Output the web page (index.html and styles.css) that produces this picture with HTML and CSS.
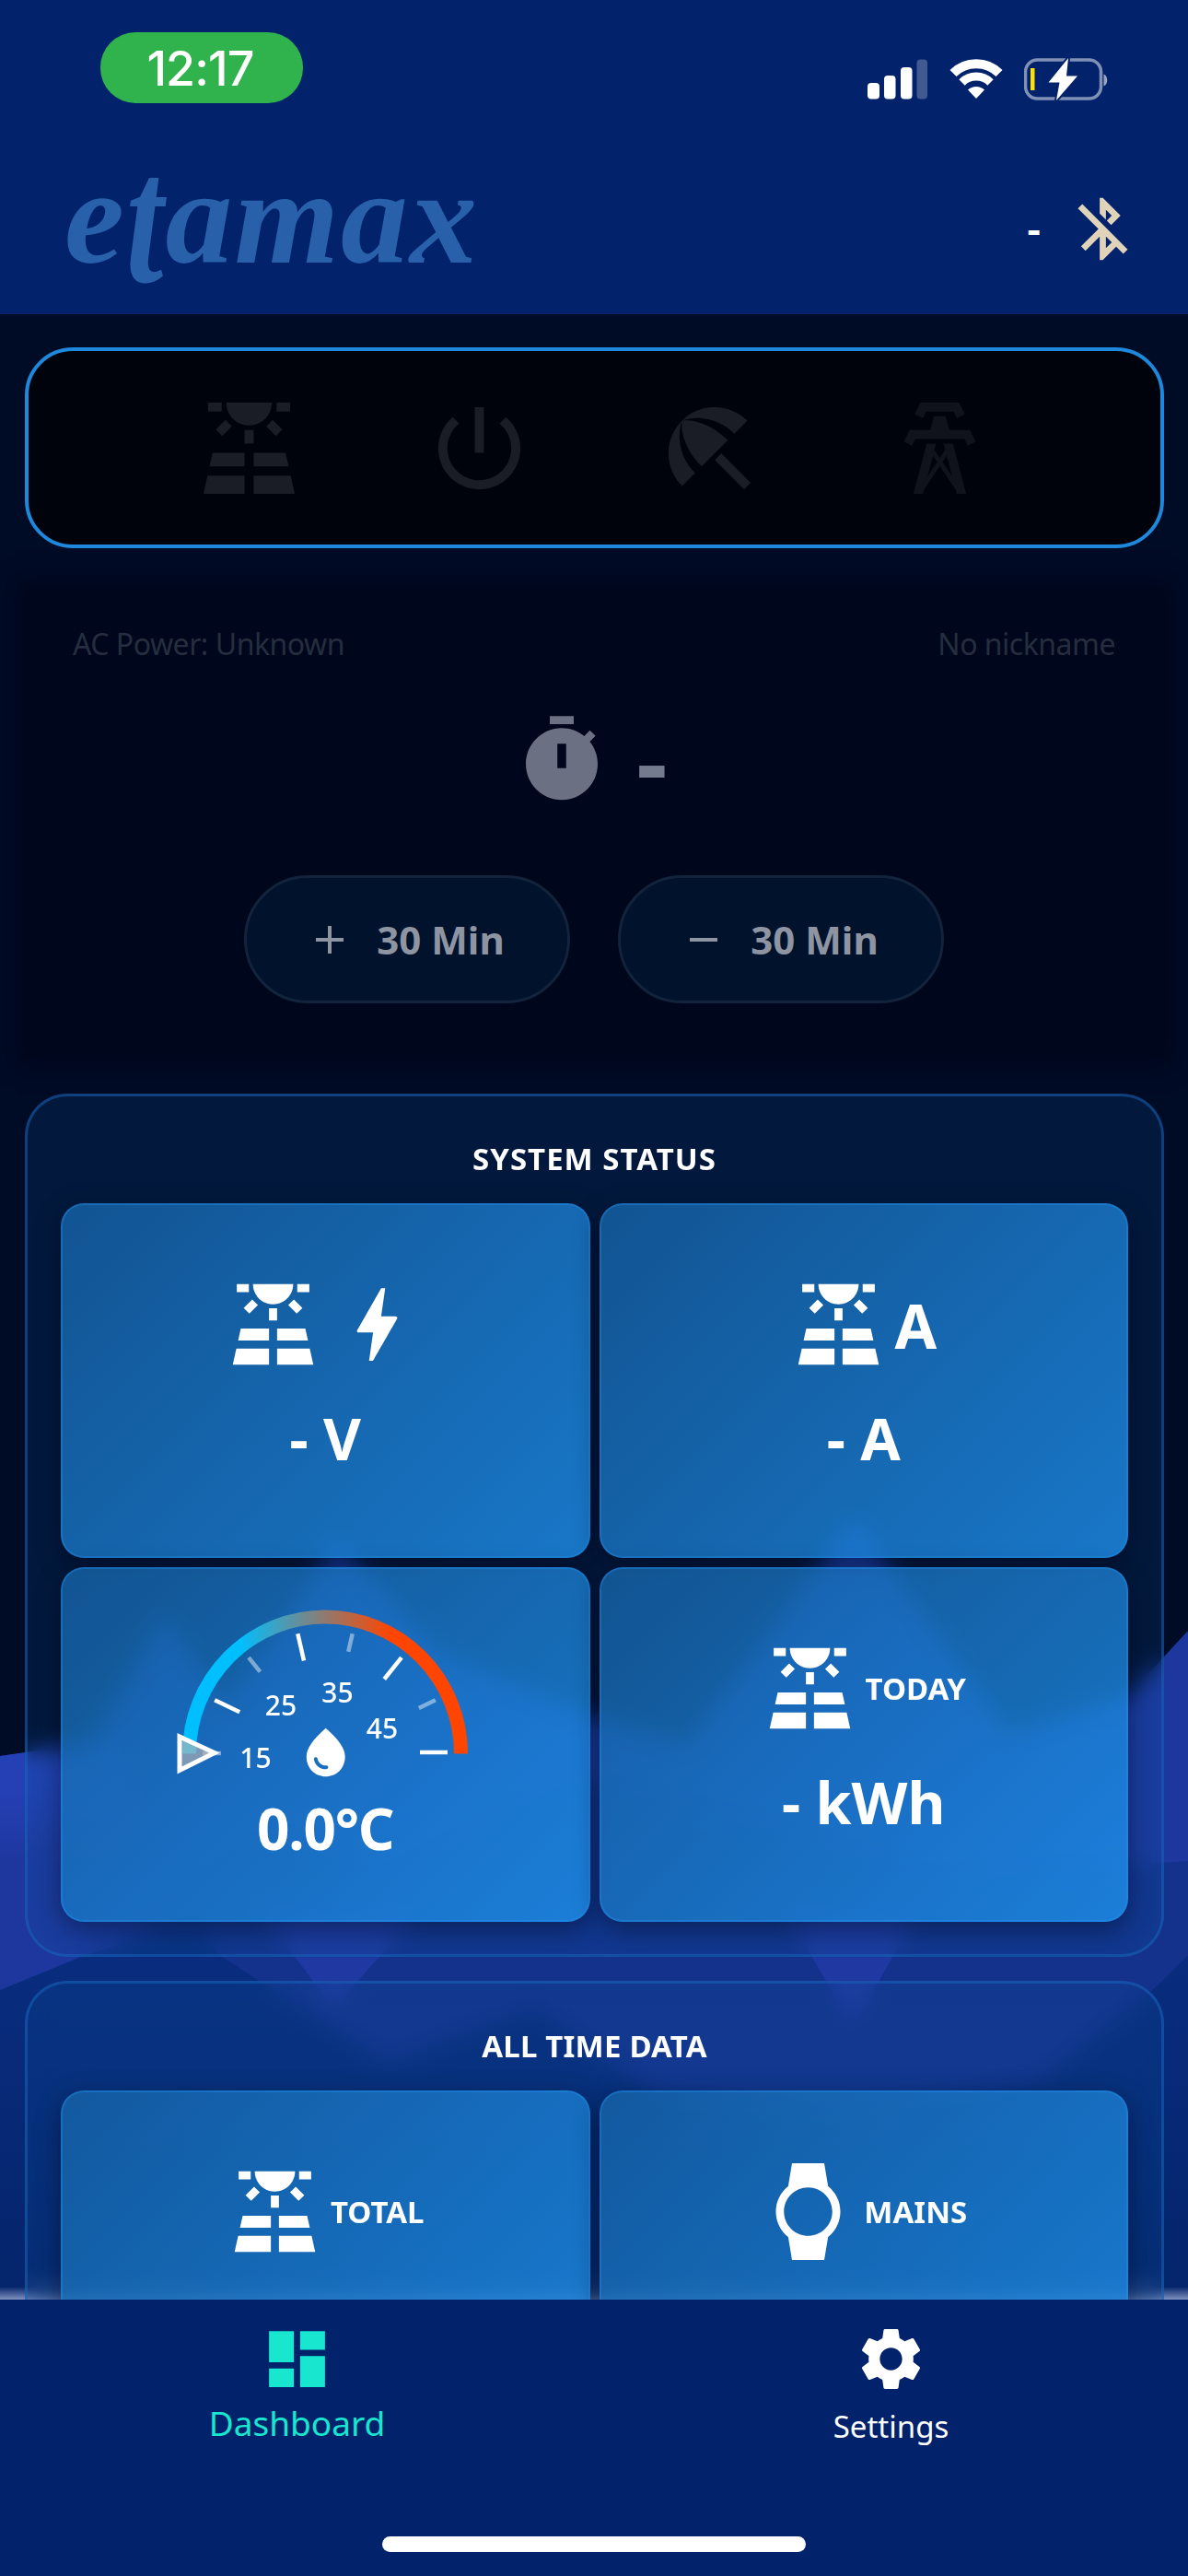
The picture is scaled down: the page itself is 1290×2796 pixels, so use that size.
FILE: index.html
```html
<!DOCTYPE html>
<html lang="en">
<head>
<meta charset="utf-8">
<title>etamax</title>
<link rel="stylesheet" href="styles.css">
</head>
<body>
<svg class="defs" width="0" height="0" aria-hidden="true">
  <symbol id="solar" viewBox="0 0 24 24"><path d="M3.33 16H11v-3H4zM13 16h7.67L20 13h-7zM21.11 18H13v4h9zM2 22h9v-4H2.89zM11 8h2v3h-2zM15.76 7.21l1.41-1.41 2.12 2.12-1.41 1.41zM4.71 7.92L6.83 5.8l1.41 1.41-2.12 2.12zM3 2h3v2H3zM18 2h3v2h-3zM12 7c2.76 0 5-2.24 5-5H7c0 2.76 2.24 5 5 5z"/></symbol>
</svg>

<div class="screen">
  <header class="header">
    <div class="statusbar">
      <span class="clock">12:17</span>
      <div class="indicators">
        <svg width="66" height="44" viewBox="0 0 66 44" fill="#fff"><rect x="0" y="26" width="13" height="17.5" rx="4"/><rect x="18" y="18" width="12.5" height="25.5" rx="4"/><rect x="36" y="9" width="12.5" height="34.5" rx="4"/><rect x="53.5" y="0.5" width="11.5" height="43" rx="4" opacity=".25"/></svg>
        <svg class="wifi" width="58" height="44" viewBox="0 0 58 44" fill="none" stroke="#fff"><path d="M4 15.5a35.5 35.5 0 0 1 50 0" stroke-width="10"/><path d="M13.5 25.5a22 22 0 0 1 31 0" stroke-width="9"/><path d="M29 43l-9-9.5a13 13 0 0 1 18 0z" fill="#fff" stroke="none"/></svg>
        <svg width="92" height="48" viewBox="0 0 92 48"><rect x="1.5" y="3" width="82" height="42" rx="13" fill="none" stroke="#fff" stroke-opacity=".5" stroke-width="3.5"/><path d="M86.5 18.5v13c5-2 5-11 0-13z" fill="#fff" opacity=".6"/><rect x="7" y="12" width="4.5" height="24" fill="#ffe000"/><path d="M48 1L26.5 27.5h12L35 47 58 20.5H46z" fill="#fff" stroke="#02236b" stroke-width="4" paint-order="stroke"/></svg>
      </div>
    </div>
    <div class="brandbar">
      <div class="brand">e<span class="tall">t</span>amax</div>
      <div class="link"><span>-</span>
        <svg width="81" height="81" viewBox="0 0 24 24" fill="#dfd4ba"><path d="M13 5.83l1.88 1.88-1.6 1.6 1.41 1.41 3.02-3.02L12 2h-1v5.03l2 2v-3.2zM5.41 4L4 5.41 10.59 12 5 17.59 6.41 19 11 14.41V22h1l4.29-4.29 2.3 2.29L20 18.59 5.41 4zM13 18.17v-3.76l1.88 1.88L13 18.17z"/></svg>
      </div>
    </div>
  </header>

  <main class="content">
    <svg class="backdrop" width="1290" height="2155" viewBox="0 341 1290 2155" aria-hidden="true">
      <defs><linearGradient id="low" x1="0" y1="0" x2="0" y2="1"><stop offset="0" stop-color="#0a2d80"/><stop offset="1" stop-color="#04246b"/></linearGradient>
      <linearGradient id="left" x1="0" y1="1890" x2="0" y2="2020" gradientUnits="userSpaceOnUse"><stop offset="0" stop-color="#2540b5"/><stop offset=".4" stop-color="#2540b5"/><stop offset="1" stop-color="#1e379f"/></linearGradient></defs>
      <rect y="341" width="1290" height="2155" fill="#000b26"/>
      <path fill="#1e379f" d="M0 1906L100 1892 178 1755 245 1850 366 1672 480 1795 640 1862 745 1893 928 1648 1096 1882 1225 1840 1290 1770V2300H0z"/>
      <path fill="url(#left)" d="M0 1906L100 1892 140 1885V2060H0z"/>
      <path fill="#14318c" d="M120 2115L300 1990 420 2040 620 1930 860 1990 1010 2040 1290 2020V2320H120z"/>
      <path fill="url(#low)" d="M0 2160L90 2123 210 2085 240 2123 420 2240 580 2180 720 2280 900 2300 1130 2260 1251 2160 1290 2123V2496H0z"/>
      <path fill="#2038a1" d="M280 2070H460L362 2180zM850 2070H1000L926 2200z"/>
    </svg>

    <section class="modes">
      <svg viewBox="0 0 24 24"><use href="#solar"/></svg>
      <svg viewBox="0 0 24 24"><path d="M13 3h-2v10h2V3zm4.83 2.17l-1.42 1.42C17.99 7.86 19 9.81 19 12c0 3.87-3.13 7-7 7s-7-3.13-7-7c0-2.19 1.01-4.14 2.58-5.42L6.17 5.17C4.23 6.82 3 9.26 3 12c0 4.97 4.03 9 9 9s9-4.03 9-9c0-2.74-1.23-5.18-3.17-6.83z"/></svg>
      <svg viewBox="0 0 24 24"><path d="M13.127 14.56l1.43-1.43 6.44 6.443L19.57 21zm4.293-5.73l2.86-2.86c-3.95-3.95-10.35-3.96-14.3-.02 3.93-1.3 8.31-.25 11.44 2.88zM5.95 5.98c-3.94 3.95-3.93 10.35.02 14.3l2.86-2.86C5.7 14.29 4.65 9.91 5.95 5.98zm.02-.02l-.01.01c-.38 3.01 1.17 6.88 4.3 10.02l5.73-5.73c-3.13-3.13-7.01-4.68-10.02-4.3z"/></svg>
      <svg class="dim" viewBox="0 0 24 24"><path d="M8.28 5.45L6.5 4.55 7.76 2H16.23L17.5 4.55 15.72 5.44 15 4H9L8.28 5.45M18.62 8H14.09L13.3 5H10.7L9.91 8H5.38L4.1 10.55 5.89 11.44 6.62 10H17.38L18.1 11.45 19.89 10.56 18.62 8M17.77 22H15.7L15.46 21.1 12 15.9 8.53 21.1 8.3 22H6.23L9.12 11H11.19L10.83 12.35 12 14.1 13.16 12.35 12.81 11H14.88L17.77 22M11.4 15L10.5 13.65 9.32 18.13 11.4 15M14.68 18.12L13.5 13.64 12.6 15 14.68 18.12Z"/></svg>
    </section>

    <section class="timer">
      <div class="timer-info"><span>AC Power: Unknown</span><span>No nickname</span></div>
      <div class="timer-value">
        <svg width="104" height="104" viewBox="0 0 24 24"><path fill-rule="evenodd" d="M15 1H9v2h6V1zM10.9 14h2.2V7.9h-2.2zM19.03 7.39l1.42-1.42c-.43-.51-.9-.99-1.41-1.41l-1.42 1.42C16.07 4.74 14.12 4 12 4c-4.97 0-9 4.03-9 9s4.02 9 9 9 9-4.03 9-9c0-2.12-.74-4.07-1.97-5.61z"/></svg>
        <span class="dash">-</span>
      </div>
      <div class="timer-actions">
        <button class="step"><svg width="30" height="30" viewBox="0 0 30 30"><path d="M15 0v30M0 15h30"/></svg>30 Min</button>
        <button class="step"><svg width="30" height="30" viewBox="0 0 30 30"><path d="M0 15h30"/></svg>30 Min</button>
      </div>
    </section>

    <section class="panel">
      <h2 class="wide">SYSTEM STATUS</h2>
      <div class="tiles">
        <article class="tile">
          <div class="tile-head"><svg viewBox="0 0 24 24"><use href="#solar"/></svg><svg viewBox="0 0 24 24"><path d="M11 21h-1l1-7H7.5c-.58 0-.57-.32-.38-.66.19-.34.05-.08.07-.12C8.48 10.94 10.42 7.54 13 3h1l-1 7h3.5c.49 0 .56.33.47.51l-.07.15C12.96 17.55 11 21 11 21z"/></svg></div>
          <div class="value">- V</div>
        </article>
        <article class="tile">
          <div class="tile-head"><svg viewBox="0 0 24 24"><use href="#solar"/></svg><span class="unit">A</span></div>
          <div class="value">- A</div>
        </article>
        <article class="tile tile-gauge">
          <svg class="gauge" width="340" height="200" viewBox="183 1736 340 200">
            <defs><linearGradient id="heat" x1="198" y1="0" x2="508" y2="0" gradientUnits="userSpaceOnUse"><stop offset=".2" stop-color="#00bfff"/><stop offset=".73" stop-color="#ff4500"/></linearGradient></defs>
            <path d="M205.5 1903.5a147.5 148.5 0 0 1 295 0" fill="none" stroke="url(#heat)" stroke-width="15"/>
            <g stroke="#fff" stroke-width="4.5">
              <path d="M220 1903h30" transform="rotate(25.7 353 1903)"/><path d="M220 1903h30" transform="rotate(77.1 353 1903)"/><path d="M220 1903h30" transform="rotate(128.6 353 1903)"/><path d="M220 1902h30" transform="rotate(180 353 1902)"/>
              <g opacity=".45"><path d="M220 1903h20"/><path d="M220 1903h20" transform="rotate(51.4 353 1903)"/><path d="M220 1903h20" transform="rotate(102.9 353 1903)"/><path d="M220 1903h20" transform="rotate(154.3 353 1903)"/></g>
            </g>
            <path d="M195 1885l38 17.5-38 19z" fill="#b4b4b4" fill-opacity=".65" stroke="#fff" stroke-width="5"/>
            <g class="gauge-labels"><text x="277.5" y="1919">15</text><text x="305" y="1861.5">25</text><text x="366.5" y="1848">35</text><text x="415" y="1887">45</text></g>
            <path transform="translate(322.3 1870.5) scale(2.62)" fill="#fff" fill-rule="evenodd" d="M12 2c-5.33 4.55-8 8.48-8 11.8 0 4.98 3.8 8.2 8 8.2s8-3.22 8-8.2c0-3.32-2.67-7.25-8-11.8zM7.83 14c.37 0 .67.26.74.62.41 2.22 2.28 2.98 3.64 2.87.43-.02.79.32.79.75 0 .4-.32.73-.72.75-2.13.13-4.62-1.09-5.19-4.12-.08-.45.28-.87.74-.87z"/>
          </svg>
          <div class="value">0.0°C</div>
        </article>
        <article class="tile">
          <div class="tile-head"><svg viewBox="0 0 24 24"><use href="#solar"/></svg><span class="tag">TODAY</span></div>
          <div class="value">- kWh</div>
        </article>
      </div>
    </section>

    <section class="panel">
      <h2>ALL TIME DATA</h2>
      <div class="tiles">
        <article class="tile">
          <div class="tile-head"><svg viewBox="0 0 24 24"><use href="#solar"/></svg><span class="tag">TOTAL</span></div>
        </article>
        <article class="tile">
          <div class="tile-head"><svg viewBox="0 0 24 24"><path d="M20 12c0-2.54-1.19-4.81-3.04-6.27L16 0H8l-.95 5.73C5.19 7.19 4 9.45 4 12s1.19 4.81 3.05 6.27L8 24h8l.96-5.73C18.81 16.81 20 14.54 20 12zM6 12c0-3.31 2.69-6 6-6s6 2.69 6 6-2.69 6-6 6-6-2.69-6-6z"/></svg><span class="tag">MAINS</span></div>
        </article>
      </div>
    </section>
  </main>

  <nav class="tabs">
    <a class="tab active"><svg width="81" height="81" viewBox="0 0 24 24"><path d="M3 13h8V3H3v10zm0 8h8v-6H3v6zm10 0h8V11h-8v10zm0-18v6h8V3h-8z"/></svg><span>Dashboard</span></a>
    <a class="tab"><svg width="81" height="81" viewBox="0 0 24 24"><path d="M19.14 12.94c.04-.3.06-.61.06-.94 0-.32-.02-.64-.07-.94l2.03-1.58c.18-.14.23-.41.12-.61l-1.92-3.32c-.12-.22-.37-.29-.59-.22l-2.39.96c-.5-.38-1.03-.7-1.62-.94l-.36-2.54c-.04-.24-.24-.41-.48-.41h-3.84c-.24 0-.43.17-.47.41l-.36 2.54c-.59.24-1.13.57-1.62.94l-2.39-.96c-.22-.08-.47 0-.59.22L2.74 8.87c-.12.21-.08.47.12.61l2.03 1.58c-.05.3-.09.63-.09.94s.02.64.07.94l-2.03 1.58c-.18.14-.23.41-.12.61l1.92 3.32c.12.22.37.29.59.22l2.39-.96c.5.38 1.03.7 1.62.94l.36 2.54c.05.24.24.41.48.41h3.84c.24 0 .44-.17.47-.41l.36-2.54c.59-.24 1.13-.56 1.62-.94l2.39.96c.22.08.47 0 .59-.22l1.92-3.32c.12-.22.07-.47-.12-.61l-2.01-1.58zM12 15.6c-1.98 0-3.6-1.62-3.6-3.6s1.62-3.6 3.6-3.6 3.6 1.62 3.6 3.6-1.62 3.6-3.6 3.6z"/></svg><span>Settings</span></a>
    <div class="home-indicator"></div>
  </nav>
</div>
</body>
</html>
```

FILE: styles.css
```css
* { box-sizing: border-box; }

body {
  margin: 0;
  background: #000b26;
  color: #fff;
  font-family: "Noto Sans", "Open Sans", sans-serif;
}

svg { display: block; flex: none; }
.defs { position: absolute; }

.screen {
  width: 1290px;
  height: 2796px;
  display: flex;
  flex-direction: column;
  overflow: hidden;
}

.header {
  height: 341px;
  flex: none;
  background: #02236b;
}

.statusbar {
  display: flex;
  justify-content: space-between;
  align-items: flex-start;
  padding: 35px 86px 0 109px;
}

.clock {
  width: 220px;
  height: 77px;
  border-radius: 38px;
  background: #30b24d;
  font: 500 52px/79px Inter, sans-serif;
  letter-spacing: -0.9px;
  text-indent: -3px;
  text-align: center;
}

.indicators {
  display: flex;
  align-items: center;
  padding-top: 27px;
}
.wifi { margin: 0 23px; }

.brandbar {
  display: flex;
  justify-content: space-between;
  padding: 56px 52px 0 70px;
}

.brand {
  height: 160px;
  margin-top: -12px;
  color: #2860aa;
  font: italic 700 146px/160px "Liberation Serif", serif;
  letter-spacing: 2px;
}
.tall {
  display: inline-block;
  transform: translateY(18px) scaleY(1.36);
  transform-origin: 50% 77%;
}

.link {
  display: flex;
  align-items: center;
  height: 81px;
  margin-top: 40px;
  gap: 27px;
  font-size: 46px;
  font-weight: 600;
}
.link span { padding-bottom: 4px; }

.content {
  position: relative;
  flex: 1;
  min-height: 0;
  overflow: hidden;
  display: flex;
  flex-direction: column;
  padding: 36px 26px 0 27px;
}

.content::after {
  content: "";
  position: absolute;
  z-index: 0;
  left: 0;
  right: 0;
  bottom: 0;
  height: 14px;
  background: linear-gradient(rgba(180, 190, 225, 0), rgba(180, 190, 225, .7));
}

.backdrop { position: absolute; left: 0; top: 0; }

.modes {
  position: relative;
  flex: none;
  height: 218px;
  border: 4px solid #1e88dc;
  border-radius: 52px;
  background: #00030c;
  display: grid;
  grid-template-columns: repeat(4, 250px);
  justify-content: center;
  place-items: center;
}
.modes svg { width: 119px; height: 119px; fill: #1a1d25; }
.modes .dim { fill: #10131b; }

.timer {
  position: relative;
  flex: none;
  height: 510px;
  margin: 43px 0 39px;
  padding: 39px 53px 0 52px;
  background: #00061b;
  box-shadow: 0 0 22px 8px #00061b;
}

.timer-info {
  display: flex;
  justify-content: space-between;
  color: #252e3f;
  font-size: 32px;
  line-height: 44px;
  letter-spacing: -0.5px;
}

.timer-value {
  display: flex;
  align-items: center;
  justify-content: center;
  margin: 52px 7px 0 0;
  height: 104px;
  gap: 29px;
  color: #747b8e;
  font-size: 104px;
  font-weight: 700;
}
.timer-value svg { fill: #6b7083; }
.dash { padding-bottom: 2px; }

.timer-actions {
  display: flex;
  justify-content: center;
  gap: 52px;
  margin-top: 73px;
}

.step {
  width: 354px;
  height: 139px;
  padding: 0 0 0 7px;
  border: 3px solid #12233c;
  border-radius: 70px;
  background: #00122c;
  color: #8e94a1;
  display: flex;
  align-items: center;
  justify-content: center;
  gap: 36px;
  font: 700 42px/50px "Noto Sans", sans-serif;
}
.step svg { stroke: #8e94a1; stroke-width: 4; }

.panel {
  position: relative;
  z-index: 1;
  flex: none;
  margin-bottom: 26px;
  padding: 44px 36px 35px;
  border: 3px solid rgba(24, 104, 190, .5);
  border-radius: 46px;
  background: rgba(10, 86, 154, .2);
  backdrop-filter: blur(12px);
}

.panel h2 {
  margin: 0 0 24px;
  font-size: 33px;
  font-weight: 700;
  line-height: 48px;
  letter-spacing: 0.2px;
  text-align: center;
}
.panel h2.wide { letter-spacing: 1px; }

.tiles {
  display: grid;
  grid-template-columns: 1fr 1fr;
  grid-auto-rows: 385px;
  gap: 10px;
}

.tile {
  display: flex;
  flex-direction: column;
  align-items: center;
  padding-top: 77px;
  border: 2px solid rgba(33, 150, 243, .35);
  border-radius: 25px;
  background: linear-gradient(135deg, rgba(22, 100, 168, .8), rgba(31, 144, 235, .8)) border-box;
  box-shadow: 0 8px 28px rgba(0, 5, 25, .45);
}

.tile-head {
  display: flex;
  align-items: center;
  height: 105px;
  gap: 8px;
}
.tile-head svg { width: 105px; height: 105px; fill: #fff; }
.unit { font-size: 66px; font-weight: 700; line-height: 80px; }
.tag { font-size: 33px; font-weight: 700; line-height: 48px; }

.value {
  margin-top: 31px;
  font-size: 63px;
  font-weight: 700;
  line-height: 80px;
}

.tile-gauge { padding-top: 33px; }
.tile-gauge .value { margin-top: 8px; font-size: 62px; letter-spacing: -1.2px; }
.gauge-labels {
  fill: #fff;
  font-size: 30px;
  font-weight: 500;
  text-anchor: middle;
}

.tabs {
  position: relative;
  flex: none;
  height: 300px;
  display: grid;
  grid-template-columns: 1fr 1fr;
  background: #02236b;
}

.tab {
  display: flex;
  flex-direction: column;
  align-items: center;
  padding-top: 24px;
  fill: #fff;
  font-size: 33px;
  line-height: 60px;
}
.tab span { margin-top: 3px; }
.tab.active { color: #19e6cf; fill: #19e6cf; font-size: 37px; }
.tab.active span { margin-top: -1px; }

.home-indicator {
  position: absolute;
  left: 415px;
  bottom: 26px;
  width: 460px;
  height: 17px;
  border-radius: 9px;
  background: #fff;
}
```
